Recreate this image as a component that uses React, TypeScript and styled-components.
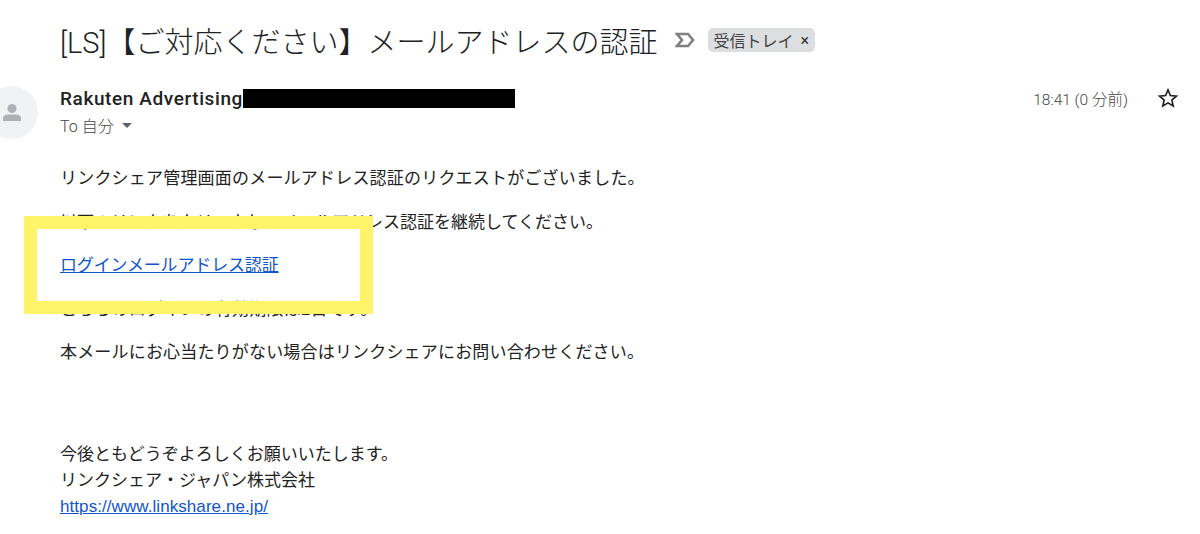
import React from 'react';
import styled, { createGlobalStyle } from 'styled-components';

const GlobalStyle = createGlobalStyle`
  html, body {
    margin: 0;
    padding: 0;
    background: #fff;
    overflow: hidden;
  }
  body {
    font-family: Roboto, "Noto Sans CJK JP", sans-serif;
    color: #222;
  }
`;

const App: React.FC = () => (
  <Page>
    <GlobalStyle />
    <Subject>
      <Title>[LS]【ご対応ください】メールアドレスの認証</Title>
      <ImportanceIcon viewBox="0 0 20 16" aria-hidden="true">
        <path d="M2 2h11l5 6-5 6H2l5-6z" fill="none" stroke="#808080" strokeWidth="2.600" />
      </ImportanceIcon>
      <Label>
        受信トレイ<LabelClose>×</LabelClose>
      </Label>
    </Subject>
    <Header>
      <Avatar>
        <svg viewBox="0 0 24 24" width="24" height="24" aria-hidden="true">
          <circle cx="12" cy="7.500" r="4.500" fill="#adb0b5" />
          <path d="M3 20v-3c0-2 2-3.500 5-3.500h8c3 0 5 1.500 5 3.500v3z" fill="#adb0b5" />
        </svg>
      </Avatar>
      <SenderBlock>
        <SenderRow>
          <SenderName>Rakuten Advertising</SenderName>
          <Redaction />
        </SenderRow>
        <ToRow>
          To 自分<Caret />
        </ToRow>
      </SenderBlock>
      <Time>18:41 (0 分前)</Time>
      <StarIcon viewBox="0 0 24 24" aria-hidden="true">
        <path
          d="M12 3.200l2.600 6.100 6.600.6-5 4.300 1.500 6.500-5.700-3.400-5.700 3.400 1.500-6.500-5-4.300 6.600-.6z"
          fill="none"
          stroke="#222"
          strokeWidth="1.800"
          strokeLinejoin="miter"
        />
      </StarIcon>
    </Header>
    <Body>
      <Paragraph $tracking={0.2}>リンクシェア管理画面のメールアドレス認証のリクエストがございました。</Paragraph>
      <Paragraph>以下のリンクをクリックし、メールアドレス認証を継続してください。</Paragraph>
      <Paragraph>
        <BodyLink href="#" $tracking={-0.15}>ログインメールアドレス認証</BodyLink>
      </Paragraph>
      <Paragraph $tracking={0.2}>こちらのログインの有効期限は1日です。</Paragraph>
      <Paragraph $tracking={0.18}>本メールにお心当たりがない場合はリンクシェアにお問い合わせください。</Paragraph>
      <Signature>
        <div>今後ともどうぞよろしくお願いいたします。</div>
        <div>リンクシェア・ジャパン株式会社</div>
        <BodyLink href="#" $tracking={0.07}>https://www.linkshare.ne.jp/</BodyLink>
      </Signature>
      <Highlight />
    </Body>
  </Page>
);

export default App;

const Page = styled.div`
  width: 1200px;
  height: 534px;
  overflow: hidden;
  padding-left: 60px;
  box-sizing: border-box;
`;

const Subject = styled.div`
  display: flex;
  align-items: center;
  height: 40px;
  padding-top: 20px;
`;

const Title = styled.h1`
  margin: 0;
  font-size: 29px;
  font-weight: 300;
  color: #202124;
  white-space: nowrap;
`;

const ImportanceIcon = styled.svg`
  width: 20px;
  height: 16px;
  margin-left: 18px;
`;

const Label = styled.span`
  display: flex;
  align-items: center;
  height: 24px;
  margin-left: 13px;
  padding: 0 6px 0 5px;
  border-radius: 5px;
  background: #dddee1;
  color: #444;
  font-size: 16px;
  white-space: nowrap;
`;

const LabelClose = styled.span`
  margin-left: 7px;
  color: #333;
  font-size: 16px;
`;

const Header = styled.div`
  display: flex;
  align-items: flex-start;
  margin-top: 26px;
  padding-right: 21px;
`;

const Avatar = styled.div`
  display: flex;
  align-items: center;
  justify-content: center;
  flex: none;
  width: 53px;
  height: 53px;
  margin-left: -75px;
  margin-right: 22px;
  border-radius: 50%;
  background: #f1f2f4;
`;

const SenderBlock = styled.div`
  flex: 1;
`;

const SenderRow = styled.div`
  display: flex;
  align-items: center;
  height: 20px;
  margin-top: 2px;
`;

const SenderName = styled.span`
  font-size: 19px;
  font-weight: 500;
  letter-spacing: 0.6px;
  color: #222;
  white-space: nowrap;
`;

const Redaction = styled.span`
  width: 272px;
  height: 19px;
  background: #000;
`;

const ToRow = styled.div`
  display: flex;
  align-items: center;
  height: 20px;
  margin-top: 7px;
  font-size: 16px;
  font-weight: 300;
  color: #444;
`;

const Caret = styled.span`
  width: 0;
  height: 0;
  margin-left: 8px;
  border-left: 5px solid transparent;
  border-right: 5px solid transparent;
  border-top: 5px solid #5f6368;
`;

const Time = styled.span`
  margin-top: 1px;
  margin-right: 29px;
  font-size: 15.500px;
  font-weight: 300;
  color: #444;
  white-space: nowrap;
`;

const StarIcon = styled.svg`
  width: 22px;
  height: 22px;
  margin-top: 1px;
`;

const Body = styled.div`
  position: relative;
  margin-top: 27px;
  font-family: "Liberation Sans", "Noto Sans CJK JP", sans-serif;
  font-size: 17px;
  line-height: 26px;
  color: #222;
`;

const Paragraph = styled.p<{ $tracking?: number }>`
  margin: 0 0 17.500px;
  letter-spacing: ${(p) => p.$tracking ?? 0}px;
  white-space: nowrap;
`;

const Signature = styled.div`
  margin-top: 75.500px;
`;

const BodyLink = styled.a<{ $tracking?: number }>`
  letter-spacing: ${(p) => p.$tracking ?? 0}px;
  color: #1155cc;
  text-decoration: underline;
`;

const Highlight = styled.div`
  position: absolute;
  left: -36px;
  top: 50px;
  width: 323px;
  height: 72px;
  border: 13px solid #fff36a;
`;
